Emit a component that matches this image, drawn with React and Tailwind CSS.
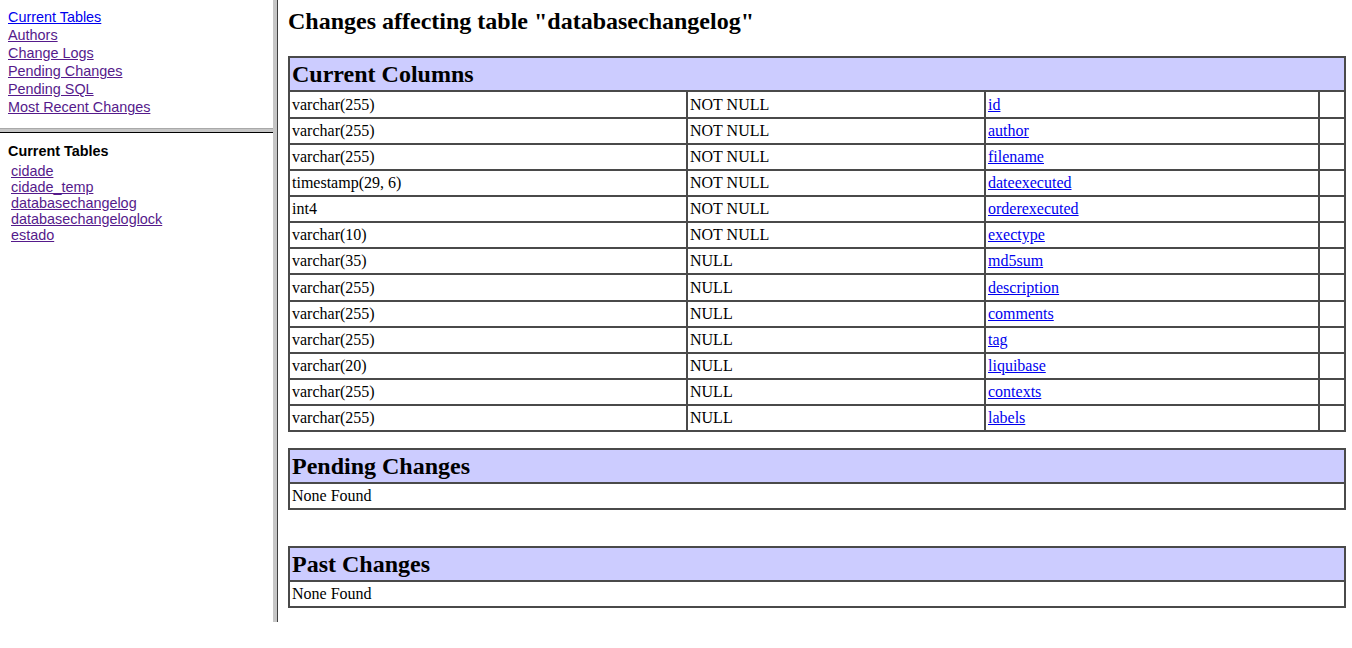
import React from 'react'

const navLinks = [
  { label: 'Current Tables', visited: false },
  { label: 'Authors', visited: true },
  { label: 'Change Logs', visited: true },
  { label: 'Pending Changes', visited: true },
  { label: 'Pending SQL', visited: true },
  { label: 'Most Recent Changes', visited: true },
]

const tables = ['cidade', 'cidade_temp', 'databasechangelog', 'databasechangeloglock', 'estado']

const columns = [
  ['varchar(255)', 'NOT NULL', 'id'],
  ['varchar(255)', 'NOT NULL', 'author'],
  ['varchar(255)', 'NOT NULL', 'filename'],
  ['timestamp(29, 6)', 'NOT NULL', 'dateexecuted'],
  ['int4', 'NOT NULL', 'orderexecuted'],
  ['varchar(10)', 'NOT NULL', 'exectype'],
  ['varchar(35)', 'NULL', 'md5sum'],
  ['varchar(255)', 'NULL', 'description'],
  ['varchar(255)', 'NULL', 'comments'],
  ['varchar(255)', 'NULL', 'tag'],
  ['varchar(20)', 'NULL', 'liquibase'],
  ['varchar(255)', 'NULL', 'contexts'],
  ['varchar(255)', 'NULL', 'labels'],
]

const SectionHeader = ({ title }) => (
  <div className="h-[32px] bg-[#ccccff] pl-[2px] flex items-center font-bold text-[24px] leading-[28px]">
    {title}
  </div>
)

const NoneFound = ({ title }) => (
  <div className="border-2 border-[#4a4a4a]">
    <SectionHeader title={title} />
    <div className="h-[26px] border-t-2 border-[#4a4a4a] pl-[2px] flex items-center">None Found</div>
  </div>
)

const App = () => {
  return (
    <main className="w-[1352px] h-[648px] bg-white text-black overflow-hidden">
      <div className="flex h-[622px]">
        {/* left frames */}
        <div className="w-[273px] shrink-0 flex flex-col font-['Liberation_Sans',Arial,sans-serif] text-[14.4px]">
          <div className="h-[128px] pt-[8px] pl-[8px] leading-[18px] flex flex-col items-start">
            {navLinks.map((link) => (
              <a key={link.label} href="#" className={`underline ${link.visited ? 'text-[#551a8b]' : 'text-[#0000ee]'}`}>
                {link.label}
              </a>
            ))}
          </div>
          <div className="h-[4px] bg-[#c6c6c6] border-t border-[#a9a9a9]"></div>
          <div className="h-px bg-black"></div>
          <div className="pt-[10px] pl-[8px] leading-[16px]">
            <div className="font-bold">Current Tables</div>
            <div className="mt-[4px] pl-[3px] flex flex-col items-start">
              {tables.map((t) => (
                <a key={t} href="#" className="underline text-[#551a8b]">{t}</a>
              ))}
            </div>
          </div>
        </div>

        {/* frame divider */}
        <div className="w-[4px] shrink-0 bg-[#c6c6c6]"></div>
        <div className="w-px shrink-0 bg-[#404040]"></div>

        {/* right frame */}
        <div className="flex-1 pl-[10px] pr-[6px] font-['Liberation_Serif','Times_New_Roman',serif] text-[16px] leading-[18px]">
          <h2 className="mt-[7px] font-bold text-[24px] leading-[28px]">Changes affecting table "databasechangelog"</h2>

          <div className="mt-[21px] border-2 border-[#4a4a4a]">
            <SectionHeader title="Current Columns" />
            {columns.map((row, idx) => (
              <div key={idx} className={`flex border-t-2 border-[#4a4a4a] ${idx === 0 || idx === 7 ? 'h-[27px]' : 'h-[26px]'}`}>
                <div className="w-[398px] shrink-0 border-r-2 border-[#4a4a4a] pl-[2px] flex items-center">{row[0]}</div>
                <div className="w-[298px] shrink-0 border-r-2 border-[#4a4a4a] pl-[2px] flex items-center">{row[1]}</div>
                <div className="w-[334px] shrink-0 border-r-2 border-[#4a4a4a] pl-[2px] flex items-center">
                  <a href="#" className="underline text-[#0000ee]">{row[2]}</a>
                </div>
                <div className="flex-1"></div>
              </div>
            ))}
          </div>

          <div className="mt-[16px]">
            <NoneFound title="Pending Changes" />
          </div>
          <div className="mt-[36px]">
            <NoneFound title="Past Changes" />
          </div>
        </div>
      </div>
    </main>
  )
}

export default App
